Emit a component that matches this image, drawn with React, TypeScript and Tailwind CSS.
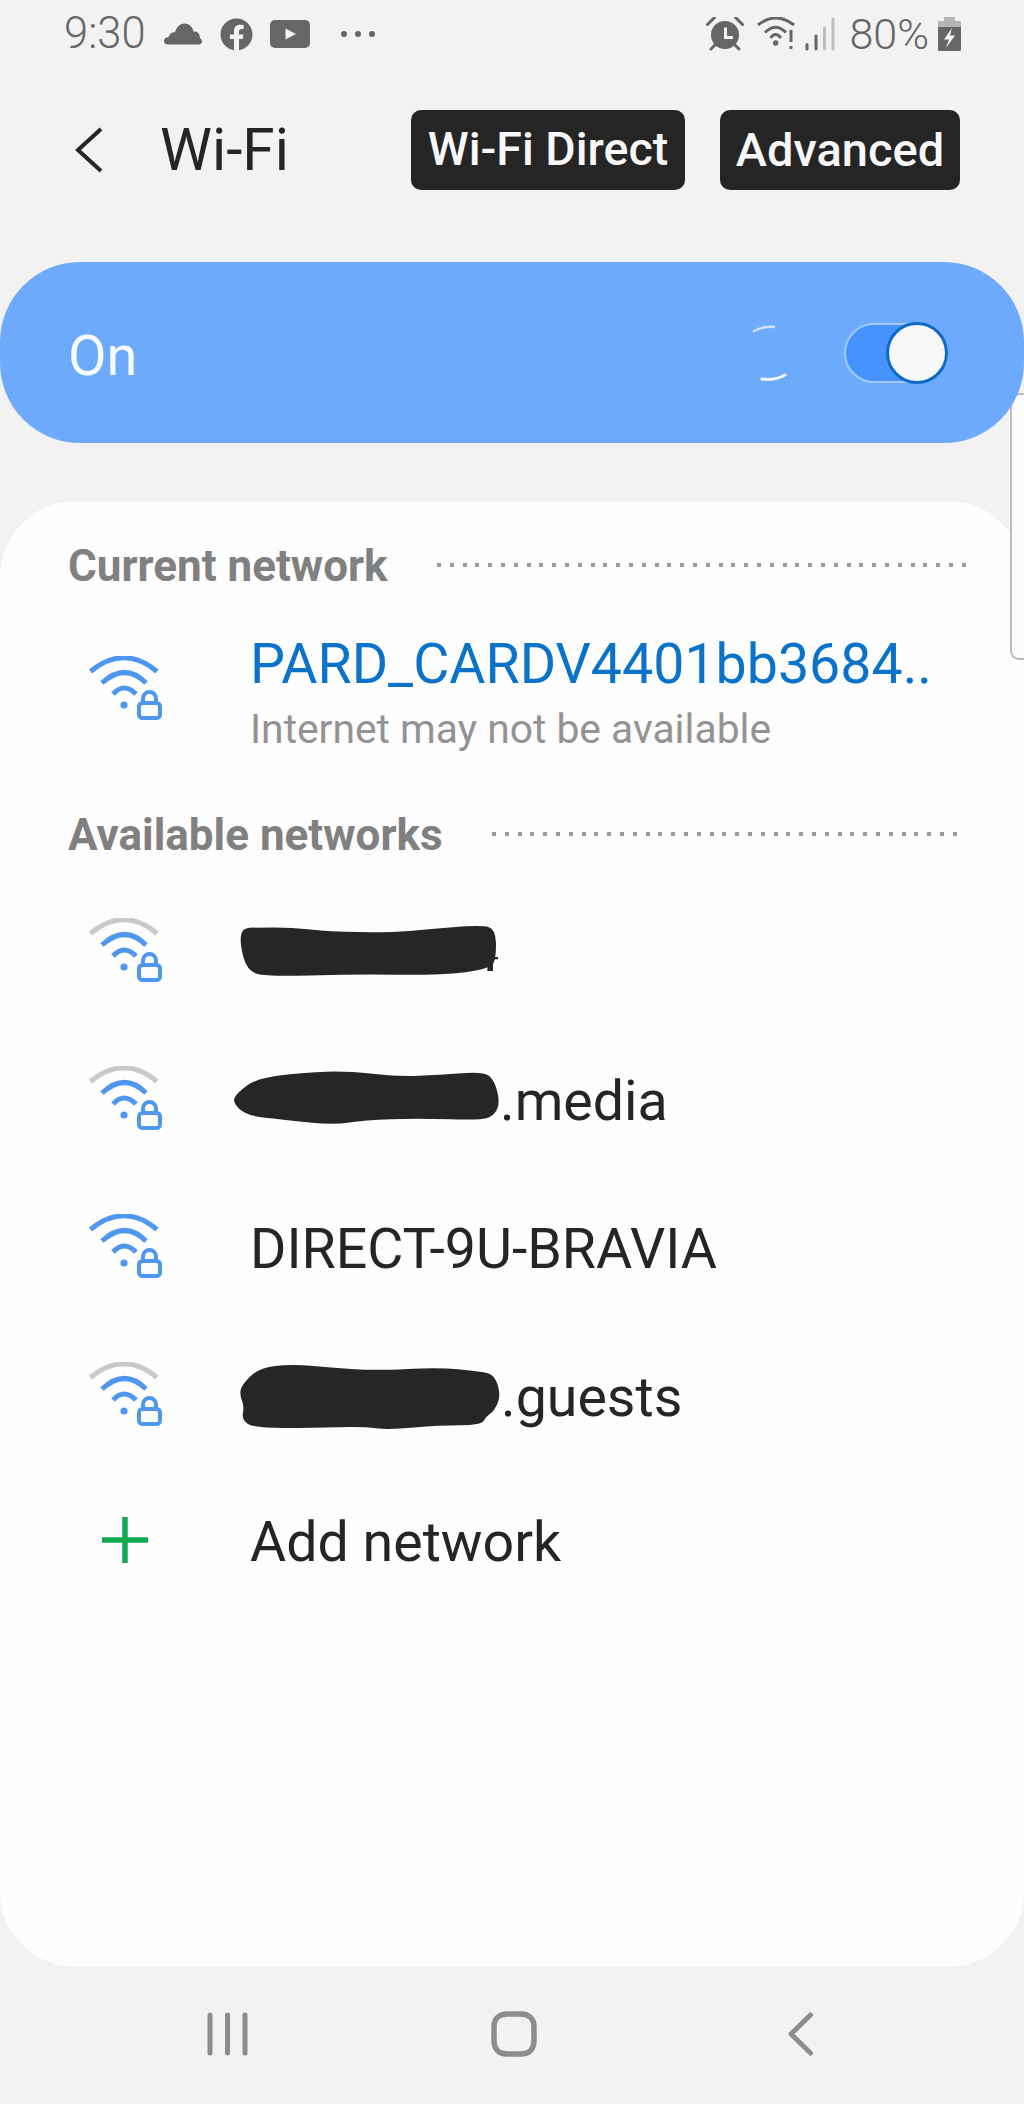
import { FaFacebook } from "react-icons/fa";

type Pt = [number, number];

// soft outline through the points, used for the redaction scribbles
const smooth = (pts: Pt[]) => {
  const mid = (a: Pt, b: Pt): Pt => [(a[0] + b[0]) / 2, (a[1] + b[1]) / 2];
  const start = mid(pts[pts.length - 1], pts[0]);
  let d = `M${start[0]} ${start[1]}`;
  pts.forEach((p, i) => {
    const m = mid(p, pts[(i + 1) % pts.length]);
    d += ` Q${p[0]} ${p[1]} ${m[0]} ${m[1]}`;
  });
  return d + "Z";
};

const scribbleA: Pt[] = [[432, 122], [470, 120], [550, 120], [640, 132], [780, 135], [880, 125], [1000, 113], [1034, 125], [1036, 200], [1025, 240], [900, 258], [700, 255], [490, 262], [445, 245], [428, 170]];
const scribbleB: Pt[] = [[465, 570], [580, 552], [680, 548], [800, 565], [900, 560], [1005, 550], [1030, 575], [1044, 640], [1032, 680], [1000, 696], [850, 690], [720, 695], [650, 710], [530, 695], [440, 682], [406, 640], [420, 612]];
const scribbleC: Pt[] = [[428, 590], [470, 538], [550, 526], [650, 538], [750, 545], [900, 536], [1000, 548], [1032, 558], [1047, 620], [1030, 665], [1012, 680], [1000, 706], [900, 706], [780, 720], [720, 710], [600, 714], [460, 714], [430, 690], [436, 650], [426, 620]];

const WifiIcon = ({ weak }: { weak?: boolean }) => (
  <svg width="74" height="64" viewBox="0 0 74 64" fill="none" className="shrink-0">
    <path d="M2.5 15.5Q36 -12 69 15.5" stroke={weak ? "#c9c9c9" : "#4f97ee"} strokeWidth="5" />
    <path d="M14 27Q37 6 58 27" stroke="#4f97ee" strokeWidth="5" />
    <path d="M25 38Q36 26 48 38" stroke="#4f97ee" strokeWidth="5" />
    <circle cx="36" cy="49" r="3.6" fill="#4f97ee" />
    <path d="M55 47V42.5a6.5 6.5 0 0 1 13 0V47" stroke="#4f97ee" strokeWidth="4" />
    <rect x="51" y="47" width="21" height="15" rx="3.5" stroke="#4f97ee" strokeWidth="4" />
  </svg>
);

const SectionHeader = ({ title }: { title: string }) => (
  <div className="flex h-[48px] items-center pl-[68px] pr-[58px]">
    <span className="text-[44px] font-bold leading-[48px] text-[#808080]">{title}</span>
    <div className="ml-[49px] mt-[-2px] h-[4px] flex-1 bg-[repeating-linear-gradient(to_right,#9c9c9c_0,#9c9c9c_4px,transparent_4px,transparent_12.8px)]" />
  </div>
);

const NetworkRow = ({ weak, children }: { weak?: boolean; children: React.ReactNode }) => (
  <div className="flex h-[148px] items-center pl-[88px]">
    <WifiIcon weak={weak} />
    <div className="ml-[88px] mt-[7px] flex items-center text-[55.5px] leading-[64px] text-[#252525]">{children}</div>
  </div>
);

export default function App() {
  return (
    <div className="relative flex h-[2104px] w-[1024px] flex-col overflow-hidden bg-[#f2f2f2] font-[Roboto,sans-serif]">
      {/* status bar */}
      <div className="flex h-[68px] items-center pl-[64px] pr-[63px] text-[#666666]">
        <span className="text-[43.5px] font-light leading-[48px]">9:30</span>
        <svg width="38" height="22" viewBox="0 0 38 22" className="ml-[18px]" fill="#666666">
          <path d="M4 21.5C1.5 21.5 0 20 0 18c0-2.300 2-3.800 4.500-3.800C5.500 10.500 8.500 8.800 11 9.300 12.500 3.500 16.500 0.500 20.500 0.500c4.500 0 8 3 9.200 8.200 1-.6 6-.6 6.300 6.500C37.500 16 38 17 38 18.500c0 2-1.500 3-3.500 3z" />
        </svg>
        <FaFacebook className="ml-[18px] text-[33px]" />
        <svg width="40" height="28" viewBox="0 0 40 28" className="ml-[17px]">
          <rect width="40" height="28" rx="5" fill="#666666" />
          <path d="M15.500 8.500L26 14 15.500 19.500z" fill="#f2f2f2" />
        </svg>
        <div className="ml-[31px] flex gap-[8px]">
          <span className="size-[6px] rounded-full bg-[#666666]" />
          <span className="size-[6px] rounded-full bg-[#666666]" />
          <span className="size-[6px] rounded-full bg-[#666666]" />
        </div>
        <div className="ml-auto flex items-center">
          <svg width="38" height="34" viewBox="0 0 38 34" fill="none">
            <circle cx="19" cy="18" r="14" fill="#666666" />
            <path d="M19.500 10.500V20.500H27" stroke="#f2f2f2" strokeWidth="3" />
            <path d="M1.500 7.500L8.500 .5M36.500 7.500L29.500 .5M5 32L9 28M33 32L29 28" stroke="#666666" strokeWidth="3" strokeLinecap="round" />
          </svg>
          <svg width="40" height="34" viewBox="0 0 40 34" fill="none" className="ml-[13px]">
            <path d="M1 8Q19 -6 37 8" stroke="#666666" strokeWidth="3" />
            <path d="M8 15.500Q18.500 5 29 15.500" stroke="#666666" strokeWidth="3" />
            <path d="M13.500 21Q18.500 14 24 21" stroke="#666666" strokeWidth="3" />
            <circle cx="18.700" cy="26" r="2.700" fill="#666666" />
            <path d="M34 13V25" stroke="#666666" strokeWidth="3" />
            <circle cx="34" cy="30.500" r="1.700" fill="#666666" />
          </svg>
          <svg width="32" height="34" viewBox="0 0 32 34" fill="none" strokeWidth="3" strokeLinecap="round" className="ml-[7px]">
            <path d="M3 27.500V32" stroke="#666666" />
            <path d="M12 19V32" stroke="#666666" />
            <path d="M20.500 11V32" stroke="#bdbdbd" />
            <path d="M29 2V32" stroke="#bdbdbd" />
          </svg>
          <span className="ml-[14px] text-[43px] font-light leading-[48px]">80%</span>
          <svg width="23" height="34" viewBox="0 0 23 34" className="ml-[9px]">
            <path d="M6 0H17V4H23V34H0V4H6z" fill="#b5b5b5" />
            <path d="M0 10H23V32a2 2 0 0 1-2 2H2a2 2 0 0 1-2-2z" fill="#666666" />
            <path d="M14 11L6 22.500H11L8 31 17 18.500H12z" fill="#f2f2f2" />
          </svg>
        </div>
      </div>

      {/* app bar */}
      <div className="mt-[42px] flex h-[80px] items-center pr-[64px]">
        <svg width="30" height="48" viewBox="0 0 30 48" fill="none" className="ml-[74px]">
          <path d="M27 3L4 24 27 45" stroke="#252525" strokeWidth="4" />
        </svg>
        <span className="ml-[56px] text-[58.5px] leading-[80px] text-[#252525]">Wi-Fi</span>
        <div className="ml-auto flex gap-[35px]">
          <button className="flex h-[80px] w-[274px] items-center justify-center rounded-[10px] bg-[#252525] text-[46.5px] font-medium text-[#f7f7f7]">
            Wi-Fi Direct
          </button>
          <button className="flex h-[80px] w-[240px] items-center justify-center rounded-[10px] bg-[#252525] text-[47px] font-medium text-[#f7f7f7]">
            Advanced
          </button>
        </div>
      </div>

      {/* scroll handle, tucked behind the switch bar */}
      <div className="absolute right-0 top-[393px] h-[267px] w-[14px] rounded-l-[9px] border-y-2 border-l-2 border-[#bcbcbc] bg-[#fbfbfb]" />

      {/* on/off bar */}
      <div className="relative mt-[72px] flex h-[181px] items-center rounded-[80px] bg-[#6eaafc] pl-[68px] pr-[76px]">
        <span className="mt-[6px] text-[56px] leading-[64px] text-[#f8fbff]">On</span>
        <svg width="44" height="60" viewBox="0 0 44 60" fill="none" className="ml-auto">
          <path d="M6 8Q15 3 26 4" stroke="#cfe2fd" strokeWidth="2.500" strokeLinecap="round" />
          <path d="M14 56Q26 58 37 52" stroke="#f4f8ff" strokeWidth="3" strokeLinecap="round" />
        </svg>
        <div className="relative ml-[52px] h-[60px] w-[104px] rounded-full border-2 border-[#a4c9fd] bg-[#4793fd]">
          <div className="absolute right-[-2px] top-[-3px] size-[62px] rounded-full border-[3px] border-[#0f6ac6] bg-[#f7f7f7]" />
        </div>
      </div>

      {/* list card */}
      <div className="mt-[58px] h-[1466px] rounded-[76px] bg-[#fdfdfd] pt-[41px]">
        <SectionHeader title="Current network" />
        <div className="flex h-[221px] items-start pl-[88px] pt-[43px]">
          <div className="mt-[23px]">
            <WifiIcon />
          </div>
          <div className="ml-[88px]">
            <div className="text-[55.5px] leading-[64px] text-[#0b72c9]">PARD_CARDV4401bb3684..</div>
            <div className="mt-[8px] text-[40.8px] leading-[48px] text-[#939393]">Internet may not be available</div>
          </div>
        </div>
        <SectionHeader title="Available networks" />
        <div className="mt-[17px]">
          <NetworkRow weak>
            <svg width="258" height="52" viewBox="428 113 612 150" preserveAspectRatio="none" className="ml-[-10px] mt-[-6px]">
              <path d={smooth(scribbleA)} fill="#262626" />
              <path d="M1015 205H1040V212H1028V246H1015z" fill="#262626" />
            </svg>
          </NetworkRow>
          <NetworkRow weak>
            <svg width="268" height="54" viewBox="406 548 638 162" preserveAspectRatio="none" className="ml-[-18px] mt-[-7px]">
              <path d={smooth(scribbleB)} fill="#262626" />
            </svg>
            <span>.media</span>
          </NetworkRow>
          <NetworkRow>DIRECT-9U-BRAVIA</NetworkRow>
          <NetworkRow weak>
            <svg width="261" height="66" viewBox="426 526 621 194" preserveAspectRatio="none" className="ml-[-10px] mt-[-2px]">
              <path d={smooth(scribbleC)} fill="#262626" />
            </svg>
            <span>.guests</span>
          </NetworkRow>
          <div className="flex h-[144px] items-center pl-[102px]">
            <svg width="46" height="46" viewBox="0 0 46 46" fill="none" className="shrink-0">
              <path d="M23 0V46M0 23H46" stroke="#12a84f" strokeWidth="5.500" />
            </svg>
            <div className="ml-[102px] mt-[6px] text-[55.5px] leading-[64px] text-[#252525]">Add network</div>
          </div>
        </div>
      </div>

      {/* navigation bar */}
      <div className="flex flex-1 items-center pb-[3px]">
        <svg width="42" height="44" viewBox="0 0 42 44" fill="none" stroke="#8d8d8d" strokeWidth="5" strokeLinecap="round" className="ml-[207px]">
          <path d="M3 3V41M20.500 3V41M38 3V41" />
        </svg>
        <svg width="46" height="46" viewBox="0 0 46 46" fill="none" className="ml-[242px]">
          <path d="M16 3H30C38 3 43 8 43 16V30C43 38 38 43 30 43H16C8 43 3 38 3 30V16C3 8 8 3 16 3z" stroke="#8d8d8d" strokeWidth="5.500" />
        </svg>
        <svg width="28" height="44" viewBox="0 0 28 44" fill="none" stroke="#8d8d8d" strokeWidth="5" strokeLinecap="round" strokeLinejoin="round" className="ml-[251px]">
          <path d="M22.500 3L3 22 22.500 41" />
        </svg>
      </div>
    </div>
  );
}
